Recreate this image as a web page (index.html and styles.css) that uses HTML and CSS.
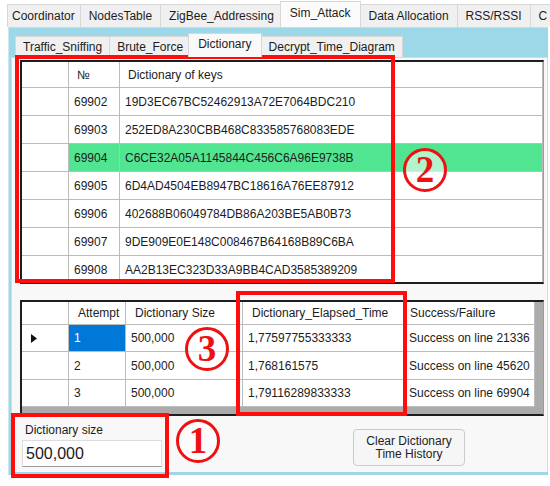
FILE: index.html
```html
<!DOCTYPE html>
<html>
<head>
<meta charset="utf-8">
<link rel="stylesheet" href="styles.css">
</head>
<body>
<div class="app">
  <div class="tabs top-tabs">
    <div class="tab">Coordinator</div>
    <div class="tab">NodesTable</div>
    <div class="tab">ZigBee_Addressing</div>
    <div class="tab active">Sim_Attack</div>
    <div class="tab">Data Allocation</div>
    <div class="tab">RSS/RSSI</div>
    <div class="tab">C</div>
  </div>
  <div class="page">
    <div class="tabs inner-tabs">
      <div class="tab">Traffic_Sniffing</div>
      <div class="tab">Brute_Force</div>
      <div class="tab active">Dictionary</div>
      <div class="tab">Decrypt_Time_Diagram</div>
    </div>
    <div class="inner-page">
      <div class="grid keys">
        <div class="row head">
          <div class="cell rh"></div>
          <div class="cell hc">№</div>
          <div class="cell hc">Dictionary of keys</div>
        </div>
        <div class="row"><div class="cell rh"></div><div class="cell">69902</div><div class="cell">19D3EC67BC52462913A72E7064BDC210</div></div>
        <div class="row"><div class="cell rh"></div><div class="cell">69903</div><div class="cell">252ED8A230CBB468C833585768083EDE</div></div>
        <div class="row found"><div class="cell rh"></div><div class="cell">69904</div><div class="cell">C6CE32A05A1145844C456C6A96E9738B</div></div>
        <div class="row"><div class="cell rh"></div><div class="cell">69905</div><div class="cell">6D4AD4504EB8947BC18616A76EE87912</div></div>
        <div class="row"><div class="cell rh"></div><div class="cell">69906</div><div class="cell">402688B06049784DB86A203BE5AB0B73</div></div>
        <div class="row"><div class="cell rh"></div><div class="cell">69907</div><div class="cell">9DE909E0E148C008467B64168B89C6BA</div></div>
        <div class="row"><div class="cell rh"></div><div class="cell">69908</div><div class="cell">AA2B13EC323D33A9BB4CAD3585389209</div></div>
      </div>
      <div class="grid hist">
        <div class="row head">
          <div class="cell rh"></div>
          <div class="cell hc">Attempt</div>
          <div class="cell hc">Dictionary Size</div>
          <div class="cell hc">Dictionary_Elapsed_Time</div>
          <div class="cell hc hc-s">Success/Failure</div>
        </div>
        <div class="row r1">
          <div class="cell rh"><svg class="arrow" width="6" height="9" viewBox="0 0 6 9"><path d="M0 0 L6 4.5 L0 9 Z" fill="#111"/></svg></div>
          <div class="cell sel">1</div>
          <div class="cell">500,000</div>
          <div class="cell">1,77597755333333</div>
          <div class="cell cs">Success on line 21336</div>
        </div>
        <div class="row r2">
          <div class="cell rh"></div>
          <div class="cell">2</div>
          <div class="cell">500,000</div>
          <div class="cell">1,768161575</div>
          <div class="cell cs">Success on line 45620</div>
        </div>
        <div class="row r3">
          <div class="cell rh"></div>
          <div class="cell">3</div>
          <div class="cell">500,000</div>
          <div class="cell">1,79116289833333</div>
          <div class="cell cs">Success on line 69904</div>
        </div>
      </div>
      <div class="controls">
        <div class="size-group">
          <div class="label">Dictionary size</div>
          <div class="textbox">500,000</div>
        </div>
        <div class="button">Clear Dictionary<br>Time History</div>
      </div>
    </div>
  </div>

  <div class="mark box2"></div>
  <div class="mark box3"></div>
  <div class="mark box1"></div>
  <div class="num n1">1</div>
  <div class="num n2">2</div>
  <div class="num n3">3</div>
</div>
</body>
</html>
```
FILE: styles.css
```css
* { box-sizing: border-box; }
html, body { margin: 0; padding: 0; background: #fff; }
body {
  font-family: "Liberation Sans", Arial, sans-serif;
  font-size: 12px;
  color: #1c1c1c;
}
.app {
  position: relative;
  width: 550px;
  height: 486px;
  overflow: hidden;
  background: #fff;
}

/* tab strips */
.tabs {
  display: flex;
  align-items: flex-end;
  white-space: nowrap;
}
.tab {
  flex: none;
  border: 1px solid #d7d7d7;
  border-bottom: none;
  background: #f0f0f0;
  padding: 0 7px;
  margin-right: -1px;
}
.tab.active {
  background: #fbfbfb;
  position: relative;
  z-index: 1;
  margin: 0 -1px 0 -2px;
  padding: 0 9px;
}
.top-tabs {
  height: 27px;
  padding-left: 7px;
  overflow: hidden;
}
.top-tabs .tab { height: 23px; line-height: 22px; padding: 0 8px; }
.top-tabs .tab:first-child { padding: 0 5px 0 4px; }
.top-tabs .tab.active { height: 26px; line-height: 22px; padding: 0 9px; }

.page {
  margin-left: 8px;
  width: 540px;
  height: 448px;
  background: #9cd8e8;
  border-top: 1px solid #d7d7d7;
  border-left: 1px solid #cfe6ec;
  padding: 0 0 3px 2px;
  display: flex;
  flex-direction: column;
}
.inner-tabs {
  height: 29px;
  padding-left: 4px;
}
.inner-tabs .tab { height: 21px; line-height: 20px; }
.inner-tabs .tab.active { height: 24px; line-height: 20px; background: #f9f9f9; }

.inner-page {
  height: 415px;
  background: #f8f8f8;
  border: 1px solid #dadada;
  border-bottom: none;
  padding: 2px 3px 0 8px;
  display: flex;
  flex-direction: column;
}

/* grids */
.grid {
  border: 2px solid #1e1e1e;
  border-right: 1px solid #9a9a9a;
  overflow: hidden;
}
.grid .row { display: grid; }
.cell {
  border-right: 1px solid #bcbcbc;
  border-bottom: 1px solid #bcbcbc;
  background: #fff;
  padding-left: 5px;
  display: flex;
  align-items: center;
  overflow: hidden;
  white-space: nowrap;
}
.cell.hc { padding-left: 8px; }
.cell.rh { padding-left: 0; }

.keys {
  height: 224px;
  background: #fff;
  flex: none;
}
.keys .row {
  grid-template-columns: 47px 51px 1fr;
  height: 28px;
}
.keys .row.head { height: 26px; }
.keys .row.found .cell:not(.rh) { background: #52e591; }

.hist {
  margin-top: 16px;
  height: 116px;
  background: #ababab;
  flex: none;
}
.hist .row {
  grid-template-columns: 47px 57px 117px 162px 130px;
  height: 27px;
}
.hist .row.head { height: 23px; }
.hist .row.r2 { height: 28px; }
.hist .cell.hc { padding-left: 9px; }
.hist .cell.hc-s { padding-left: 5px; }
.hist .cell.cs { padding-left: 4px; }
.hist .cell.sel { background: #0078d7; color: #fff; }
.arrow { margin-left: 9px; }

/* bottom controls */
.controls {
  flex: 1;
  display: flex;
  align-items: flex-start;
  padding-left: 2px;
}
.size-group {
  margin-top: 7px;
  display: flex;
  flex-direction: column;
}
.label {
  padding-left: 3px;
  height: 15px;
  line-height: 15px;
}
.textbox {
  margin-top: 2px;
  width: 140px;
  height: 27px;
  background: #fff;
  border: 1px solid #dcdcdc;
  border-bottom: 1px solid #9a9a9a;
  font-size: 16px;
  line-height: 25px;
  padding-left: 3px;
  color: #1a1a1a;
}
.button {
  margin-top: 13px;
  margin-left: 191px;
  width: 112px;
  height: 37px;
  background: #f6f6f6;
  border: 1px solid #cbcbcb;
  border-radius: 4px;
  text-align: center;
  line-height: 13px;
  padding-top: 5px;
  color: #222;
}

/* annotation overlays */
.mark {
  position: absolute;
  border: 4px solid #ff0d0d;
}
.box2 { left: 15px; top: 55px; width: 380px; height: 228px; }
.box3 { left: 236px; top: 291px; width: 171px; height: 125px; }
.box1 { left: 11px; top: 413px; width: 158px; height: 65px; }
.num {
  position: absolute;
  width: 44px;
  height: 44px;
  border: 3px solid #ee1111;
  border-radius: 50%;
  background: rgba(255,255,255,0.55);
  color: #ee1111;
  font-family: "Liberation Serif", "Times New Roman", serif;
  font-weight: bold;
  font-size: 37px;
  line-height: 38px;
  text-align: center;
}
.n1 { left: 176px; top: 419px; }
.n2 { left: 403px; top: 148px; }
.n3 { left: 185px; top: 327px; }
```
